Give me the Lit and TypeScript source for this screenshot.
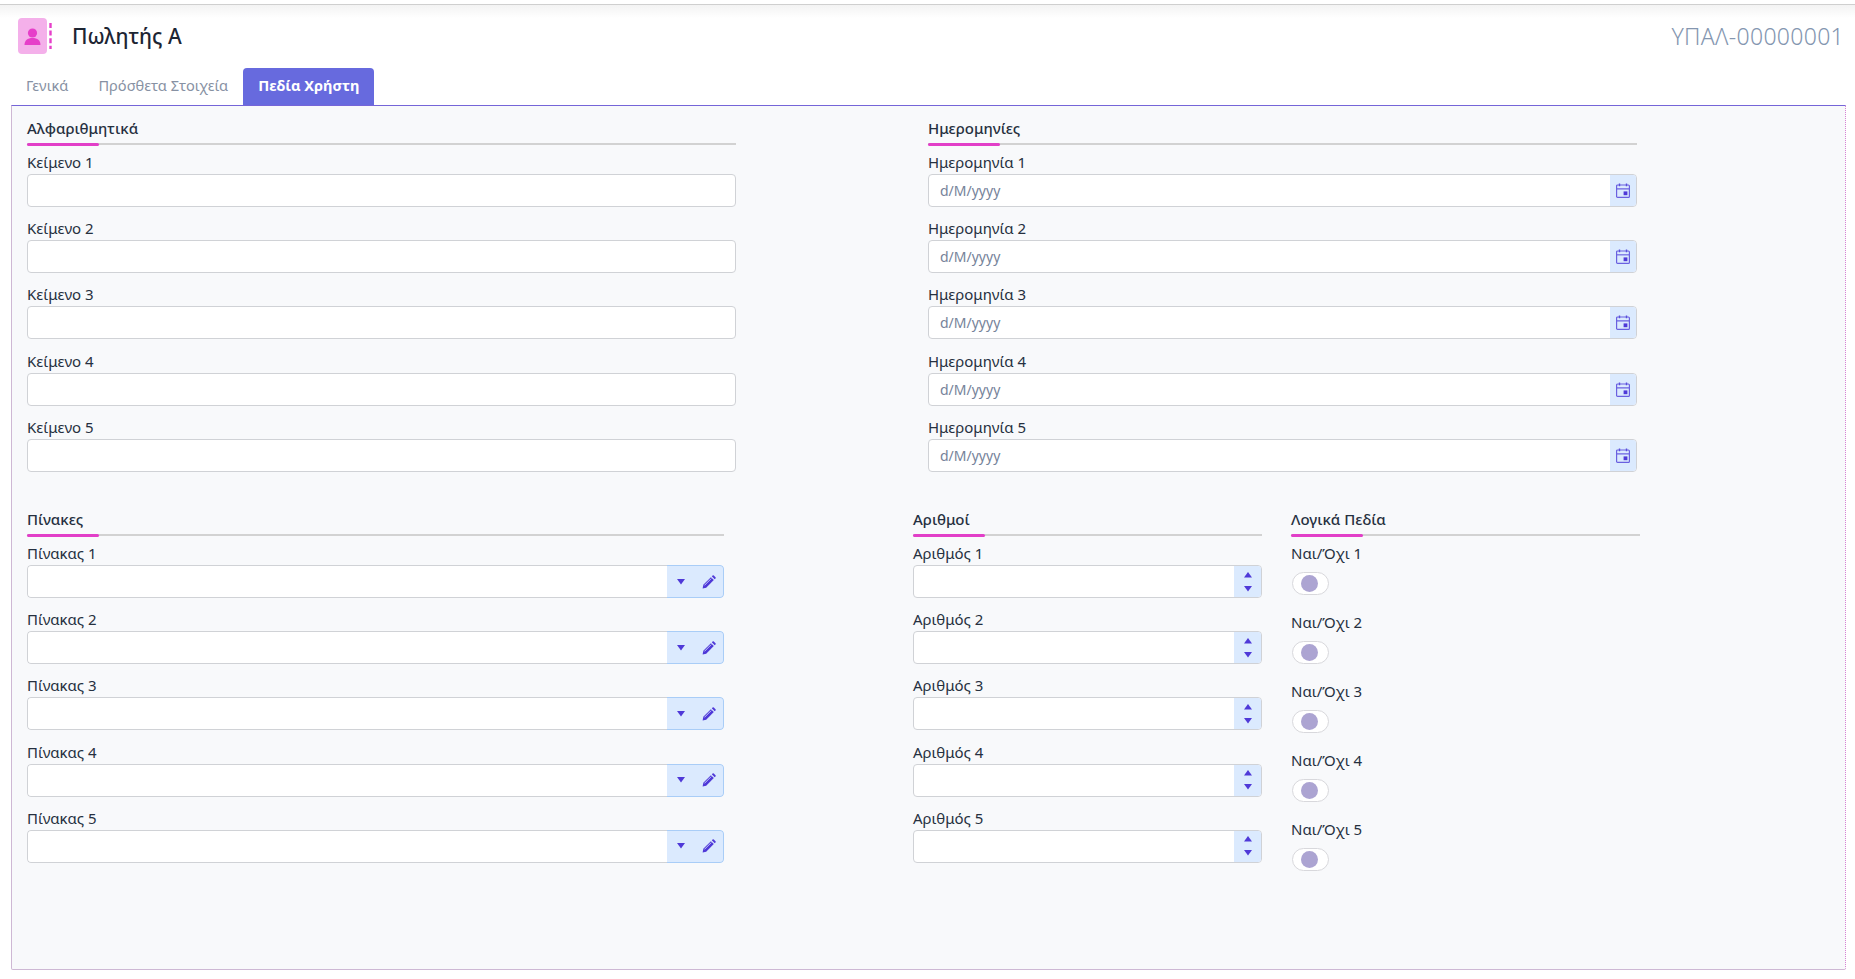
import { LitElement, css, html, svg } from 'lit'
import { customElement, state } from 'lit/decorators.js'

const NUMS = [1, 2, 3, 4, 5]

const caretDown = svg`<path d="M1 2h8L5 7.5z" fill="#4f39d8"/>`
const caretUp = svg`<path d="M1 7.5h8L5 2z" fill="#4f39d8"/>`

@customElement('app-root')
export class AppRoot extends LitElement {
  @state()
    activeTab = 2

  tabs = ['Γενικά', 'Πρόσθετα Στοιχεία', 'Πεδία Χρήστη']

  static styles = css`
    :host {
      display: block;
      height: 979px;
      overflow: hidden;
      background: #fff;
      font-family: "Noto Sans", sans-serif;
      font-size: 14px;
      color: #263040;
    }

    .topbar {
      height: 13px;
      margin-top: 4px;
      border-top: 1px solid #cfcfcf;
      background: linear-gradient(#f3f3f3, #fff);
    }

    .head {
      display: flex;
      align-items: center;
      justify-content: space-between;
      height: 36px;
      padding: 0 11px 0 18px;
    }

    .head__left {
      display: flex;
      align-items: center;
    }

    .head__icon {
      display: block;
      margin-right: 18px;
    }

    .head__title {
      font-size: 21px;
      font-weight: 500;
      color: #1d2533;
    }

    .head__code {
      font-size: 23px;
      font-weight: 300;
      color: #8496b0;
      letter-spacing: 0.3px;
    }

    .tabs {
      display: flex;
      height: 37px;
      margin-top: 14px;
      padding-left: 11px;
    }

    .tab {
      display: flex;
      align-items: center;
      padding: 0 15px 3px;
      border-radius: 4px 4px 0 0;
      color: #8791a3;
      font-size: 14.6px;
    }

    .tab--active {
      background: #676ade;
      color: #fff;
      font-weight: 700;
    }

    .panel {
      box-sizing: border-box;
      height: 865px;
      margin: 0 9px 0 11px;
      padding: 0 15px;
      background: #f8f9fb;
      border: 1px solid #ceb8d4;
      border-top-color: #7565d8;
      border-right: 1px dotted #d783d3;
      border-radius: 0 0 2px 2px;
    }

    .row {
      display: flex;
    }

    .row--first {
      height: 391px;
      gap: 192px;
    }

    .col {
      flex: none;
    }

    .col--wide {
      width: 709px;
    }

    .col--tables {
      width: 697px;
      margin-right: 189px;
    }

    .col--half {
      width: 349px;
    }

    .col--half + .col--half {
      margin-left: 29px;
    }

    .section {
      position: relative;
      height: 39px;
      border-bottom: 2px solid #d2d2d2;
      box-sizing: border-box;
      padding-top: 12px;
      line-height: 20px;
      font-size: 15px;
      font-weight: 500;
      margin-bottom: 8px;
    }

    .section::after {
      content: "";
      position: absolute;
      left: 0;
      bottom: -3px;
      width: 72px;
      height: 3px;
      border-radius: 2px;
      background: #e23fc8;
    }

    .field {
      height: 66.2px;
    }

    .field label {
      display: block;
      height: 19px;
      line-height: 19px;
      margin-bottom: 2px;
      font-size: 15px;
    }

    .control {
      display: flex;
      box-sizing: border-box;
      height: 33px;
      background: #fff;
      border: 1px solid #d0d2d6;
      border-radius: 4px;
      overflow: hidden;
    }

    .control input {
      flex: 1;
      min-width: 0;
      box-sizing: border-box;
      padding: 0 11px;
      border: 0;
      outline: 0;
      background: transparent;
      font: inherit;
      color: inherit;
    }

    .control input::placeholder {
      color: #76839a;
      opacity: 1;
    }

    .control--blue {
      border: 0;
      background: transparent;
    }

    .control--blue input {
      background: #fff;
      border: 1px solid #d0d2d6;
      border-right: 0;
      border-radius: 4px 0 0 4px;
    }

    .addon {
      flex: none;
      display: flex;
      align-items: center;
      justify-content: center;
      background: #dbeafe;
    }

    .addon--date {
      width: 26px;
    }

    .addon--pick {
      box-sizing: border-box;
      width: 28px;
      border: 1px solid #a9cdf7;
      border-width: 1px 0;
    }

    .addon--pick:last-child {
      width: 29px;
      border-right-width: 1px;
      border-radius: 0 4px 4px 0;
    }

    .addon--spin {
      width: 27px;
      flex-direction: column;
      gap: 4px;
    }

    .field--toggle {
      height: 69px;
    }

    .toggle {
      display: flex;
      align-items: center;
      box-sizing: border-box;
      width: 37px;
      height: 23px;
      margin: 9px 0 0 1px;
      padding-left: 8px;
      background: #fff;
      border: 1px solid #d8d8dc;
      border-radius: 12px;
    }

    .toggle span {
      width: 17px;
      height: 17px;
      border-radius: 50%;
      background: #aca4d2;
    }
  `

  renderCalendar () {
    return html`<svg width="14" height="15" viewBox="0 0 14 15" fill="none">
      <rect x="0.6" y="2" width="12.8" height="12.4" rx="1" stroke="#6a60e0" stroke-width="1.2"/>
      <path d="M1 5.8h12" stroke="#6a60e0" stroke-width="1.2"/>
      <path d="M3.5 0.6v2.6M10.5 0.6v2.6" stroke="#5b50dc" stroke-width="1.4"/>
      <rect x="7.6" y="8.4" width="3.8" height="3.8" fill="#4f39d8"/>
    </svg>`
  }

  renderPencil () {
    return html`<svg width="14" height="14" viewBox="0 0 14 14">
      <path d="M0.6 13.4l0.7-3.6 7.6-7.6 2.9 2.9-7.6 7.6z" fill="#4f39d8"/>
      <path d="M9.8 1.3l0.8-0.8a0.9 0.9 0 0 1 1.2 0l1.7 1.7a0.9 0.9 0 0 1 0 1.2l-0.8 0.8z" fill="#4f39d8"/>
      <path d="M2.4 10.4l6.8-6.8" stroke="#dbeafe" stroke-width="0.8"/>
    </svg>`
  }

  renderText (n: number) {
    return html`<div class="field">
      <label>Κείμενο ${n}</label>
      <div class="control"><input type="text" /></div>
    </div>`
  }

  renderDate (n: number) {
    return html`<div class="field">
      <label>Ημερομηνία ${n}</label>
      <div class="control">
        <input type="text" placeholder="d/M/yyyy" />
        <div class="addon addon--date">${this.renderCalendar()}</div>
      </div>
    </div>`
  }

  renderTable (n: number) {
    return html`<div class="field">
      <label>Πίνακας ${n}</label>
      <div class="control control--blue">
        <input type="text" />
        <div class="addon addon--pick">
          <svg width="10" height="10" viewBox="0 0 10 10">${caretDown}</svg>
        </div>
        <div class="addon addon--pick">${this.renderPencil()}</div>
      </div>
    </div>`
  }

  renderNumber (n: number) {
    return html`<div class="field">
      <label>Αριθμός ${n}</label>
      <div class="control">
        <input type="text" />
        <div class="addon addon--spin">
          <svg width="10" height="10" viewBox="0 0 10 10">${caretUp}</svg>
          <svg width="10" height="10" viewBox="0 0 10 10">${caretDown}</svg>
        </div>
      </div>
    </div>`
  }

  renderToggle (n: number) {
    return html`<div class="field field--toggle">
      <label>Ναι/Όχι ${n}</label>
      <div class="toggle"><span></span></div>
    </div>`
  }

  render () {
    return html`
      <div class="topbar"></div>
      <div class="head">
        <div class="head__left">
          <svg class="head__icon" width="36" height="36" viewBox="0 0 36 36">
            <rect width="29" height="36" rx="4" fill="#f4b0ea"/>
            <circle cx="14.5" cy="15" r="4.6" fill="#e63fc9"/>
            <path d="M6.5 27c0-4.6 3-7 8-7s8 2.4 8 7z" fill="#e63fc9"/>
            <path d="M32.5 5v26" stroke="#e63fc9" stroke-width="2.4" stroke-dasharray="5 2.6"/>
          </svg>
          <span class="head__title">Πωλητής Α</span>
        </div>
        <span class="head__code">ΥΠΑΛ-00000001</span>
      </div>
      <div class="tabs">
        ${this.tabs.map((tab, i) => html`<div class="tab ${i === this.activeTab ? 'tab--active' : ''}">${tab}</div>`)}
      </div>
      <div class="panel">
        <div class="row row--first">
          <div class="col col--wide">
            <div class="section">Αλφαριθμητικά</div>
            ${NUMS.map((n) => this.renderText(n))}
          </div>
          <div class="col col--wide">
            <div class="section">Ημερομηνίες</div>
            ${NUMS.map((n) => this.renderDate(n))}
          </div>
        </div>
        <div class="row">
          <div class="col col--tables">
            <div class="section">Πίνακες</div>
            ${NUMS.map((n) => this.renderTable(n))}
          </div>
          <div class="col col--half">
            <div class="section">Αριθμοί</div>
            ${NUMS.map((n) => this.renderNumber(n))}
          </div>
          <div class="col col--half">
            <div class="section">Λογικά Πεδία</div>
            ${NUMS.map((n) => this.renderToggle(n))}
          </div>
        </div>
      </div>
    `
  }
}
